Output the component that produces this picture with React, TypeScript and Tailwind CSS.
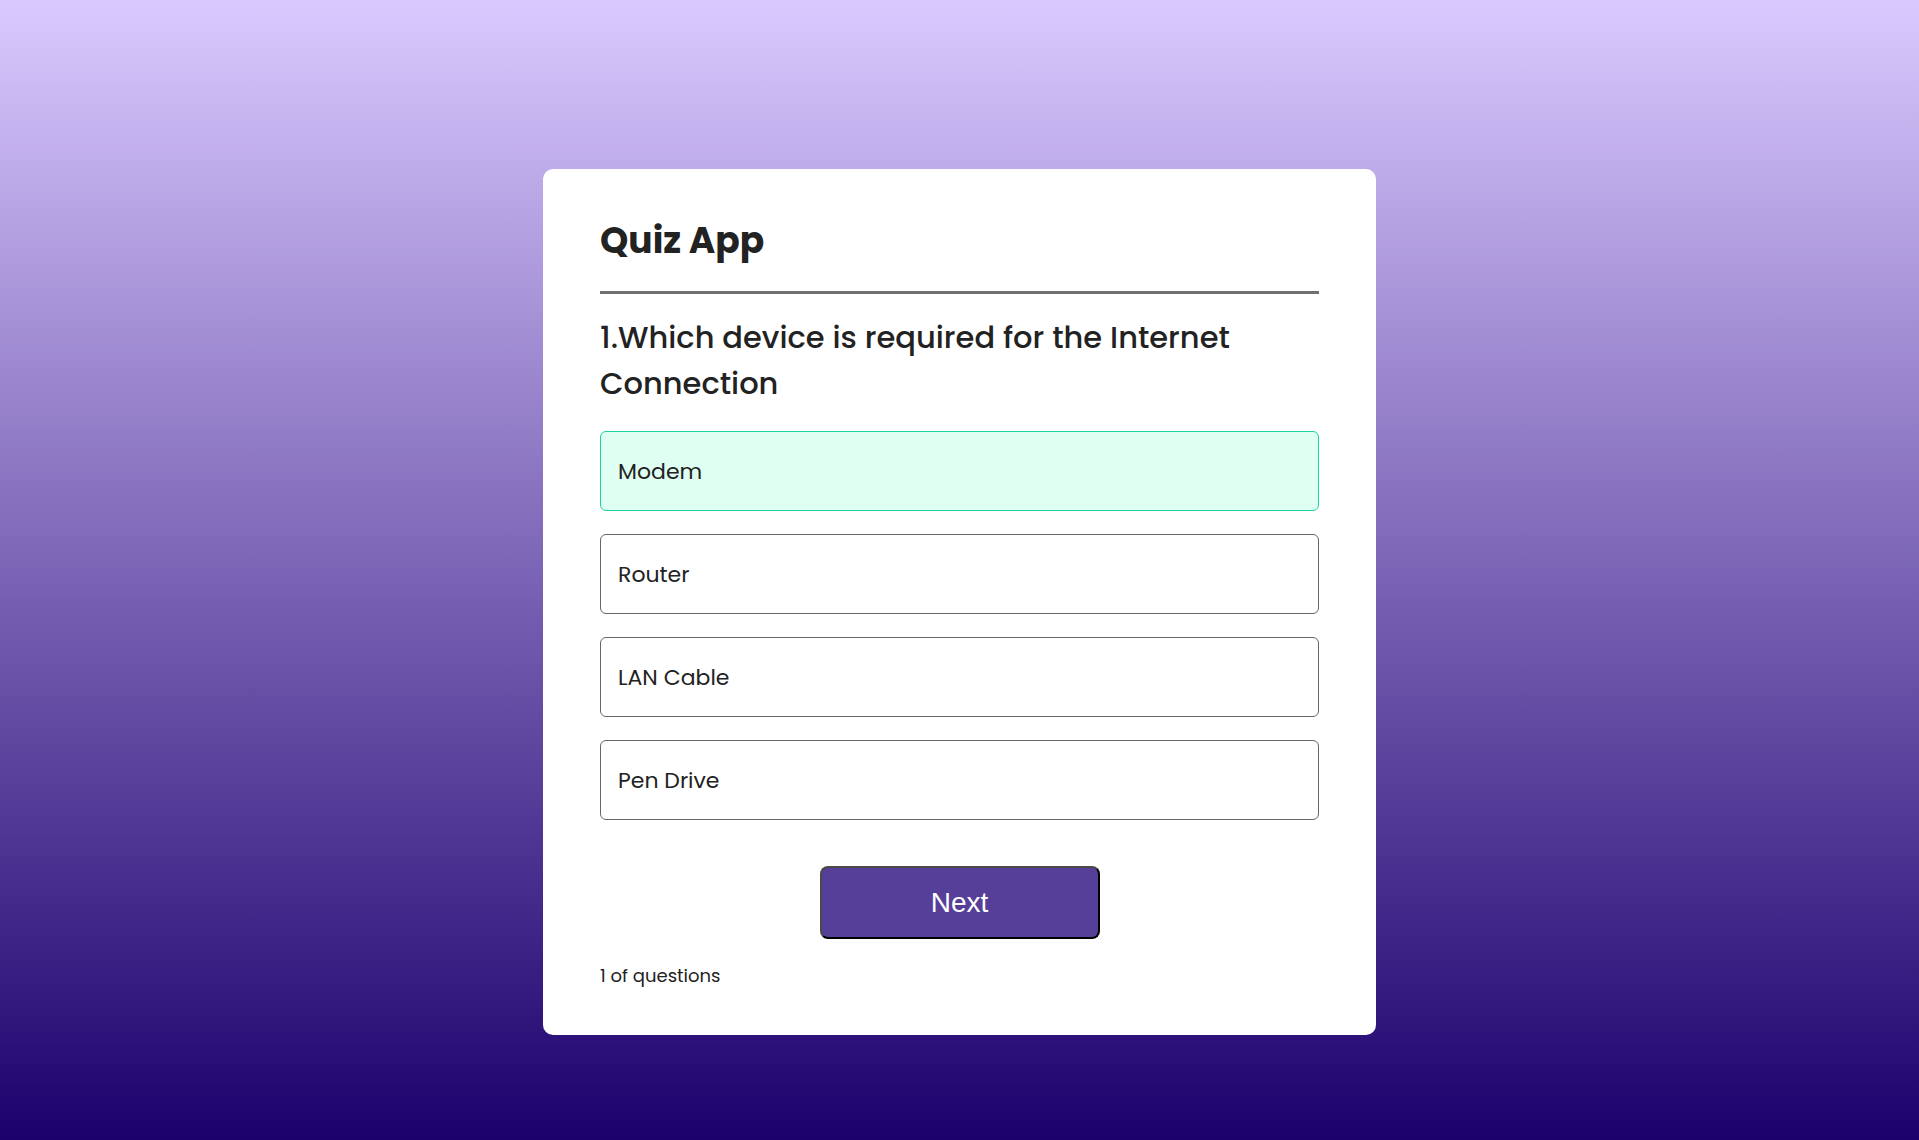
const options = ['Modem', 'Router', 'LAN Cable', 'Pen Drive'];

export default function App() {
  return (
    <div className="min-h-screen bg-[linear-gradient(to_bottom,#dac9ff,#1c006c)] pt-[169px] font-['Poppins','DejaVu_Sans',sans-serif] text-[#222]">
      <div className="mx-auto w-[833px] rounded-[10px] bg-white px-[57px] pb-[47px] pt-[48px]">
        <h1 className="border-b-[3px] border-[#707070] pb-[26px] text-[36px] font-bold leading-[48px]">
          Quiz App
        </h1>
        <h2 className="mt-[21px] text-[30.5px] font-medium leading-[46px]">
          1.Which device is required for the Internet Connection
        </h2>
        <div className="mt-[24px] flex flex-col gap-[23px]">
          {options.map((opt, i) => (
            <button
              key={opt}
              type="button"
              className={
                i === 0
                  ? 'flex h-[80px] w-full items-center rounded-[6px] border border-[#1dd3a0] bg-[#dffff2] px-[17px] text-left text-[22px]'
                  : 'flex h-[80px] w-full items-center rounded-[6px] border border-[#666] bg-white px-[17px] text-left text-[22px]'
              }
            >
              {opt}
            </button>
          ))}
        </div>
        <div className="mt-[46px] flex justify-center">
          <button
            type="button"
            className="h-[73px] w-[280px] rounded-[8px] border-2 border-t-[#4a4a4a] border-l-[#4a4a4a] border-b-black border-r-black bg-[#553f99] font-['Liberation_Sans',Arial,sans-serif] text-[28px] text-white"
          >
            Next
          </button>
        </div>
        <p className="mt-[25px] text-[18px] leading-[24px]">1 of questions</p>
      </div>
    </div>
  );
}
